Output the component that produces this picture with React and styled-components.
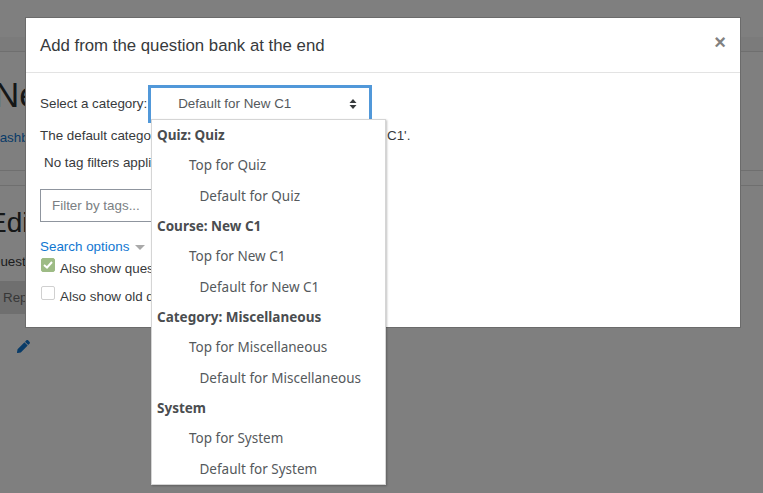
import React from 'react';
import styled, { createGlobalStyle } from 'styled-components';

const GlobalStyle = createGlobalStyle`
  html, body {
    margin: 0;
    height: 100%;
    overflow: hidden;
    background: #fff;
  }
  body {
    font-family: "Liberation Sans", Arial, sans-serif;
    font-size: 13.4px;
    color: #373a3c;
  }
`;

const Page = styled.div`
  width: 763px;
  height: 493px;
  overflow: hidden;
  position: relative;
  background: #fff;
`;

const TopBar = styled.div`
  height: 37px;
  background: #fff;
`;

const NavBand = styled.div`
  height: 14px;
  background: #f6f6f6;
  border-bottom: 1px solid #dedede;
`;

const Rule = styled.div`
  height: 1px;
  background: #dedede;
  margin-bottom: ${({ $gap }) => $gap || 0}px;
`;

const PageHead = styled.div`
  height: 118px;
  padding-top: 22px;
  box-sizing: border-box;
`;

const PageTitle = styled.h1`
  margin: 0 0 0 -6px;
  font-size: 35px;
  font-weight: 400;
  line-height: 42px;
  color: #2b2e30;
  white-space: nowrap;
`;

const Crumb = styled.a`
  display: block;
  margin: 14px 0 0 -10px;
  line-height: 16px;
  color: #1177d1;
`;

const EditSection = styled.div`
  padding-top: 20px;
`;

const EditTitle = styled.h2`
  margin: 0 0 0 -12px;
  font-size: 28px;
  font-weight: 400;
  line-height: 34px;
  color: #2b2e30;
  white-space: nowrap;
`;

const QuestionLabel = styled.div`
  margin: 14px 0 0 -10px;
  line-height: 16px;
`;

const RepaginateButton = styled.div`
  margin-top: 11px;
  height: 33px;
  width: 80px;
  padding: 0 3px;
  line-height: 33px;
  box-sizing: border-box;
  background: #dedede;
  color: #6e6e6e;
`;

const EditIcon = styled.svg`
  display: block;
  width: 13px;
  height: 13px;
  margin: 26px 0 0 17px;
  fill: #1177d1;
`;

const Backdrop = styled.div`
  position: absolute;
  inset: 0;
  background: rgba(0, 0, 0, 0.5);
`;

const Modal = styled.div`
  position: absolute;
  left: 25px;
  top: 17px;
  width: 716px;
  height: 311px;
  box-sizing: border-box;
  background: #fff;
  border: 1px solid #6b6b6b;
`;

const ModalHeader = styled.div`
  height: 55px;
  box-sizing: border-box;
  display: flex;
  align-items: center;
  justify-content: space-between;
  padding: 0 14px;
  border-bottom: 1px solid #e3e3e3;
`;

const ModalTitle = styled.h3`
  margin: 2px 0 0;
  font-size: 16.8px;
  font-weight: 400;
  color: #373a3c;
`;

const CloseButton = styled.span`
  font-size: 20px;
  font-weight: 700;
  line-height: 1;
  color: #818181;
  margin-top: -6px;
`;

const ModalBody = styled.div`
  padding: 12px 14px;
`;

const CategoryRow = styled.div`
  display: flex;
  align-items: center;
  height: 38px;
`;

const RowLabel = styled.span`
  margin-top: -2px;
`;

const SelectBox = styled.div`
  width: 224px;
  height: 38px;
  margin-left: 1px;
  box-sizing: border-box;
  border: 3px solid #5198d9;
  border-bottom: 0;
  display: flex;
  align-items: center;
  justify-content: space-between;
  padding: 0 12px 4px 27px;
  color: #55595c;
  font-size: 13.4px;
`;

const Carets = styled.svg`
  width: 8px;
  height: 10px;
  fill: #373a3c;
`;

const InfoLine = styled.div`
  margin-top: 3px;
  height: 20px;
  line-height: 20px;
  white-space: nowrap;
  position: relative;
`;

const InfoTail = styled.span`
  position: absolute;
  left: 347px;
`;

const TagLine = styled.div`
  margin: 7px 0 0 4px;
  height: 20px;
  line-height: 20px;
`;

const FilterInput = styled.div`
  margin-top: 16px;
  width: 200px;
  height: 33px;
  box-sizing: border-box;
  border: 1px solid #8f959e;
  padding: 0 11px;
  line-height: 32px;
  color: #7b7f83;
`;

const SearchOptions = styled.div`
  margin-top: 15px;
  color: #1177d1;
  display: flex;
  align-items: center;
  gap: 6px;
  height: 18px;
`;

const SearchArrow = styled.span`
  width: 0;
  height: 0;
  border-left: 5px solid transparent;
  border-right: 5px solid transparent;
  border-top: 5px solid #a9a9a9;
  margin-top: 3px;
`;

const CheckRow = styled.div`
  display: flex;
  align-items: center;
  gap: 5px;
  margin: ${({ $top }) => $top}px 0 0 1px;
  height: 20px;
  white-space: nowrap;
`;

const CheckBox = styled.span`
  width: 14px;
  height: 14px;
  box-sizing: border-box;
  border-radius: 2px;
  display: flex;
  align-items: center;
  justify-content: center;
  margin-top: -6px;
  background: ${({ $checked }) => ($checked ? '#9dbb85' : '#fff')};
  border: 1px solid ${({ $checked }) => ($checked ? '#9dbb85' : '#d0d0d0')};
`;

const Dropdown = styled.ul`
  position: absolute;
  left: 151px;
  top: 119px;
  width: 235px;
  height: 366px;
  box-sizing: border-box;
  margin: 0;
  padding: 0;
  list-style: none;
  background: #fff;
  border: 1px solid #d5d5d5;
  box-shadow: 1px 1px 2px rgba(0, 0, 0, 0.25);
  font-family: "Noto Sans", "Open Sans", sans-serif;
  font-size: 13.5px;
  color: #55595c;
`;

const Option = styled.li`
  height: 30.35px;
  line-height: 30px;
  white-space: nowrap;
  padding-left: ${({ $level }) => [5, 37, 47.5][$level]}px;
  font-weight: ${({ $level }) => ($level === 0 ? 700 : 400)};
  color: ${({ $level }) => ($level === 0 ? '#4a4d50' : '#55595c')};
`;

const categories = [
  ['Quiz: Quiz', 'Top for Quiz', 'Default for Quiz'],
  ['Course: New C1', 'Top for New C1', 'Default for New C1'],
  ['Category: Miscellaneous', 'Top for Miscellaneous', 'Default for Miscellaneous'],
  ['System', 'Top for System', 'Default for System'],
];

const App = () => (
  <Page>
    <GlobalStyle />
    <TopBar />
    <NavBand />
    <PageHead>
      <PageTitle>New C1</PageTitle>
      <Crumb>Dashboard</Crumb>
    </PageHead>
    <Rule $gap={14} />
    <Rule />
    <EditSection>
      <EditTitle>Editing quiz</EditTitle>
      <QuestionLabel>Questions: 0</QuestionLabel>
      <RepaginateButton>Repaginate</RepaginateButton>
      <EditIcon viewBox="0 0 512 512">
        <path d="M497.9 142.1l-46.1 46.1c-4.7 4.7-12.3 4.7-17 0l-111-111c-4.7-4.7-4.7-12.3 0-17l46.1-46.1c18.7-18.7 49.1-18.7 67.9 0l60.1 60.1c18.8 18.7 18.8 49.1 0 67.9zM284.2 99.8L21.6 362.4.4 483.9c-2.9 16.4 11.4 30.6 27.8 27.8l121.5-21.3 262.6-262.6c4.7-4.7 4.7-12.3 0-17l-111-111c-4.8-4.7-12.4-4.7-17.1 0z" />
      </EditIcon>
    </EditSection>
    <Backdrop />
    <Modal>
      <ModalHeader>
        <ModalTitle>Add from the question bank at the end</ModalTitle>
        <CloseButton>×</CloseButton>
      </ModalHeader>
      <ModalBody>
        <CategoryRow>
          <RowLabel>Select a category:</RowLabel>
          <SelectBox>
            Default for New C1
            <Carets viewBox="0 0 8 10">
              <path d="M4 0l3.5 4H.5zM4 10L.5 6h7z" />
            </Carets>
          </SelectBox>
        </CategoryRow>
        <InfoLine>
          The default category for questions shared in this context
          <InfoTail>C1'.</InfoTail>
        </InfoLine>
        <TagLine>No tag filters applied</TagLine>
        <FilterInput>Filter by tags...</FilterInput>
        <SearchOptions>
          Search options
          <SearchArrow />
        </SearchOptions>
        <CheckRow $top={3}>
          <CheckBox $checked>
            <svg width="10" height="8" viewBox="0 0 10 8" fill="none" stroke="#fff" strokeWidth="2">
              <path d="M1 4l3 2.5L9 1" />
            </svg>
          </CheckBox>
          Also show questions from subcategories
        </CheckRow>
        <CheckRow $top={8}>
          <CheckBox />
          Also show old questions
        </CheckRow>
      </ModalBody>
    </Modal>
    <Dropdown>
      {categories.map((group) =>
        group.map((label, level) => (
          <Option key={label} $level={level}>
            {label}
          </Option>
        ))
      )}
    </Dropdown>
  </Page>
);

export default App;
